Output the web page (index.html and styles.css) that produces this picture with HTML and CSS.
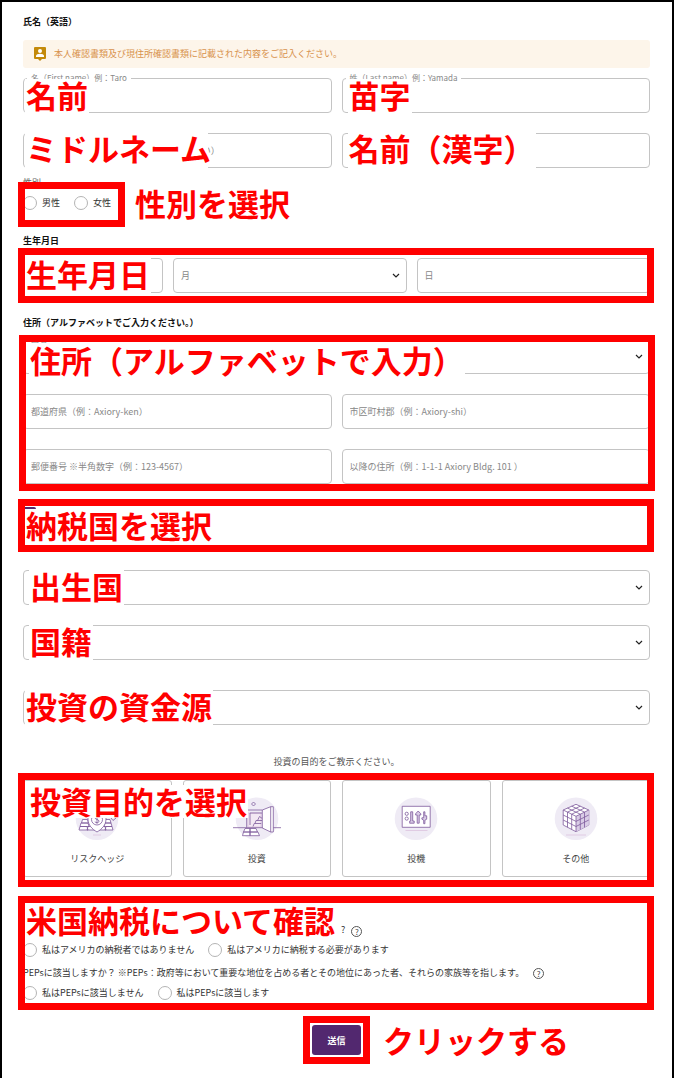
FILE: index.html
```html
<!DOCTYPE html>
<html lang="ja">
<head>
    <meta charset="UTF-8">
    <meta name="viewport" content="width=device-width, initial-scale=1.0">
    <title>口座開設フォーム</title>
    <link rel="stylesheet" href="styles.css">
</head>
<body>
    <form class="page">
        <!-- Name -->
        <h2>氏名（英語）</h2>
        <div class="notice">
            <svg width="12" height="14" viewBox="0 0 12 14" aria-hidden="true">
                <path fill="#c48a0a" d="M1 0h10a1 1 0 0 1 1 1v10a1 1 0 0 1-1 1H8l-2 2-2-2H1a1 1 0 0 1-1-1V1a1 1 0 0 1 1-1z"/>
                <circle cx="6" cy="4" r="2" fill="#fff"/>
                <path fill="#fff" d="M2 10V9c0-1.500 2-2.300 4-2.300s4 .8 4 2.300v1z"/>
            </svg>
            本人確認書類及び現住所確認書類に記載された内容をご記入ください。
        </div>
        <div class="grid names">
            <div class="field">
                <input type="text" id="first-name">
                <label class="float" for="first-name">名（First name）例：Taro</label>
                <span class="note">名前</span>
            </div>
            <div class="field">
                <input type="text" id="last-name">
                <label class="float" for="last-name">姓（Last name）例：Yamada</label>
                <span class="note note-inset">苗字</span>
            </div>
            <div class="field">
                <input type="text" id="middle-name" placeholder="ミドルネーム（お持ちの場合はご記入下さい）">
                <label class="note note-short note-high" for="middle-name">ミドルネーム</label>
            </div>
            <div class="field">
                <input type="text" id="kanji-name">
                <label class="note note-inset note-high" for="kanji-name">名前（漢字）</label>
            </div>
        </div>

        <!-- Gender -->
        <p class="label">性別</p>
        <div class="gender">
            <div class="radios">
                <label><input type="radio" name="gender">男性</label>
                <label><input type="radio" name="gender">女性</label>
                <span class="frame frame-gender"></span>
            </div>
            <span class="callout">性別を選択</span>
        </div>

        <!-- Birthday -->
        <h2 class="birth-title">生年月日</h2>
        <div class="birth">
            <div class="field">
                <input type="text" id="year">
                <label class="note" for="year">生年月日</label>
            </div>
            <div class="field">
                <select aria-label="月"><option>月</option></select>
            </div>
            <div class="field">
                <input type="text" aria-label="日" placeholder="日">
            </div>
            <span class="frame frame-birth"></span>
        </div>

        <!-- Address -->
        <h2 class="address-title">住所（アルファベットでご入力ください。）</h2>
        <div class="grid address">
            <div class="field wide">
                <select id="country"><option></option></select>
                <label class="float" for="country">国名</label>
                <span class="note note-inset note-low">住所（アルファベットで入力）</span>
            </div>
            <div class="field"><input type="text" aria-label="都道府県" placeholder="都道府県（例：Axiory-ken）"></div>
            <div class="field"><input type="text" aria-label="市区町村郡" placeholder="市区町村郡（例：Axiory-shi）"></div>
            <div class="field"><input type="text" aria-label="郵便番号" placeholder="郵便番号 ※半角数字（例：123-4567）"></div>
            <div class="field"><input type="text" aria-label="以降の住所" placeholder="以降の住所（例：1-1-1 Axiory Bldg. 101 ）"></div>
            <span class="frame frame-address"></span>
        </div>

        <!-- Tax country -->
        <div class="tax">
            <input type="checkbox" id="tax" checked>
            <label class="note" for="tax">納税国を選択</label>
            <span class="frame"></span>
        </div>

        <div class="selects">
            <div class="field">
                <select id="birthplace"><option></option></select>
                <label class="note note-inset" for="birthplace">出生国</label>
            </div>
            <div class="field">
                <select id="nationality"><option></option></select>
                <label class="note note-inset" for="nationality">国籍</label>
            </div>
            <div class="field funds">
                <select id="funds"><option></option></select>
                <label class="note" for="funds">投資の資金源</label>
            </div>
        </div>

        <!-- Purpose -->
        <p class="purpose-title">投資の目的をご教示ください。</p>
        <div class="cards">
            <button type="button" class="card">
                <svg class="icon" viewBox="0 0 48 44" aria-hidden="true">
                    <circle class="disc" cx="24" cy="22.700" r="21.300"/>
                    <path class="fill" d="M8 27h7l1 3.500H7zM9.500 23.500h5l1 3.500h-7zM15 30.500h6l1 3.500h-8zM7 30.500h7l1 3.500H6zM32 27h6l1 3.500h-8zM32 23.500h5l1 3.500h-6zM33 30.500h6l1 3.500h-8zM27 30.500h5l1 3.500h-7z"/>
                    <path class="fill" d="M24 11c3 2.500 6 3 9 3v9c0 6-4 10-9 13-5-3-9-7-9-13v-9c3 0 6-.5 9-3z"/>
                    <circle class="line" cx="24" cy="23.500" r="5.500"/>
                    <path class="line" d="M26 21c-1-1-4-1-4 .8 0 2 4 1.200 4 3.400 0 1.800-3 1.800-4.200.6M24 19.200v8.600M38 22l2 2.500 3-2.500"/>
                    <path class="shade" d="M20 39h8"/>
                </svg>
                リスクヘッジ
            </button>
            <button type="button" class="card">
                <svg class="icon" viewBox="0 0 48 44" aria-hidden="true">
                    <circle class="disc" cx="24" cy="22.700" r="21.300"/>
                    <path class="shade" d="M15 17h13v14H15z"/>
                    <path class="line" d="M0 31.700h48M13.700 31.700V14h15.600M17 29V17h12M20.500 6l2 2-2 2-2-2zM20 30.500l1.200-3h7M22 27.500l1-3h6M24.500 24.500l2-4 2.800 2"/>
                    <path class="fill" d="M29.300 14l8.400-3.300h2.600V36h-2.600l-8.400-4z"/>
                    <path class="line" d="M37.700 10.700V36"/>
                    <path class="fill" d="M12 32.500h5v3.500h-6.500zM17 32.500h6l1.500 3.500H17zM10.500 36H17v3.700H9.500zM17 36h8l1.500 3.700H17z"/>
                </svg>
                投資
            </button>
            <button type="button" class="card">
                <svg class="icon" viewBox="0 0 48 44" aria-hidden="true">
                    <circle class="disc" cx="24" cy="22.700" r="21.300"/>
                    <path class="fill" d="M10.200 10.300h28v21h-28z"/>
                    <circle class="line" cx="14.700" cy="17.800" r="1.600"/>
                    <circle class="line" cx="14.700" cy="22.600" r="1.600"/>
                    <path class="tool" d="M18.700 15.800h2v9.200h1.500v2.200h-4.500V25h1zM26.200 15l2.600 2.800v1.200h-1.600v8.200h-2V19h-1.600v-1.200zM31.700 15.800h1.200v4h1.800v3.400l-1.800 1v3.500h-1.200v-3.500l-1.800-1v-1.400h1.800z"/>
                    <path class="shade" d="M13.500 34.500h22"/>
                </svg>
                投機
            </button>
            <button type="button" class="card">
                <svg class="icon" viewBox="0 0 48 44" aria-hidden="true">
                    <circle class="disc" cx="24" cy="22.700" r="21.300"/>
                    <path class="fill" d="M24 8.300l12.800 5.700v15L24 35.700 11.200 29V14z"/>
                    <path fill="#d9cce6" d="M24 20.300L36.800 14v15L24 35.700z"/>
                    <path class="line" d="M11.200 14L24 20.300 36.800 14M24 20.300v15.400M15.500 12.100l12.800 6.100M19.700 10.200l12.800 5.900M32.500 12.100l-12.800 6.100M28.300 10.200l-12.800 5.900M15.500 16.100v15.200M19.700 18.200v15.300M28.300 18.200v15.300M32.500 16.100v15.200M11.200 19L24 25.400 36.800 19M11.200 24L24 30.500 36.800 24"/>
                    <path class="shade" d="M14 39h20"/>
                </svg>
                その他
            </button>
            <span class="note note-inset note-cards">投資目的を選択</span>
            <span class="frame frame-cards"></span>
        </div>

        <!-- US tax and PEPs -->
        <div class="confirm">
            <div class="question us-question">
                <span class="callout">米国納税について確認</span>
                <span>?</span>
                <button type="button" class="help">?</button>
            </div>
            <div class="radios">
                <label><input type="radio" name="us-tax">私はアメリカの納税者ではありません</label>
                <label><input type="radio" name="us-tax">私はアメリカに納税する必要があります</label>
            </div>
            <div class="question">
                <span>PEPsに該当しますか？ ※PEPs：政府等において重要な地位を占める者とその地位にあった者、それらの家族等を指します。</span>
                <button type="button" class="help">?</button>
            </div>
            <div class="radios">
                <label><input type="radio" name="peps">私はPEPsに該当しません</label>
                <label><input type="radio" name="peps">私はPEPsに該当します</label>
            </div>
            <span class="frame frame-confirm"></span>
        </div>

        <div class="submit-row">
            <div class="submit-box">
                <button type="submit" class="submit">送信</button>
            </div>
            <span class="callout">クリックする</span>
        </div>
    </form>
</body>
</html>
```
FILE: styles.css
```css
* {
    box-sizing: border-box;
}
body {
    margin: 0;
    background-color: #fff;
    color: #333;
    font-family: "Noto Sans CJK JP", "Noto Sans", sans-serif;
    font-size: 9px;
    line-height: 14px;
}
h2, p {
    margin: 0;
    font-size: 9px;
}
h2 {
    color: #111;
    font-weight: 700;
}
input, select, button {
    margin: 0;
    font-family: inherit;
    font-size: 9px;
}
.page {
    min-height: 100vh;
    padding: 13px 22px 14px 21px;
    border: 2px solid #000;
}
.notice {
    display: flex;
    align-items: center;
    gap: 8px;
    height: 28px;
    margin: 11px 0 10px;
    padding: 0 11px;
    border-radius: 3px;
    background-color: #fdf5ea;
    color: #d8924c;
}

/* Fields */
.grid {
    display: grid;
    grid-template-columns: 1fr 1fr;
    gap: 20px 10px;
}
.wide {
    grid-column: 1 / -1;
}
.field {
    position: relative;
    min-width: 0;
}
.field input,
.field select {
    display: block;
    width: 100%;
    height: 35px;
    padding: 0 7px;
    border: 1px solid #c4c4c4;
    border-radius: 4px;
    background-color: #fff;
    color: #888;
}
.field input::placeholder {
    color: #888;
    opacity: 1;
}
.field select {
    appearance: none;
    background-image: url("data:image/svg+xml,%3Csvg xmlns='http://www.w3.org/2000/svg' width='8' height='5' viewBox='0 0 8 5'%3E%3Cpath d='M1 1l3 3 3-3' fill='none' stroke='%23222' stroke-width='1.200'/%3E%3C/svg%3E");
    background-repeat: no-repeat;
    background-position: right 6px center;
}
.float {
    position: absolute;
    top: -7px;
    left: 4px;
    padding: 0 4px;
    background-color: #fff;
    color: #888;
    font-size: 8px;
}

/* Red annotations */
.note, .callout {
    color: #f00;
    font-size: 31px;
    font-weight: 700;
    line-height: 34px;
    white-space: nowrap;
}
.note {
    position: absolute;
    top: 0;
    left: 2px;
    padding: 0 1px 4px;
    background-color: #fff;
    line-height: 32px;
}
.names .note {
    top: 1px;
}
.names .note-high {
    top: -1px;
}
.note-inset {
    left: 6px;
}
.note-short {
    width: 183px;
}
.address .note-low {
    top: 5px;
}
.note-cards {
    top: 5px;
    padding-bottom: 1px;
}
.frame {
    position: absolute;
    inset: 0 -4px 0 -5px;
    border: 7px solid #f00;
    pointer-events: none;
}
.frame-gender {
    inset: -14px -14px -17px -5px;
}
.frame-birth {
    inset: -10px -4px -10px -5px;
}
.frame-address {
    inset: -4px -5px -7px -4px;
}
.frame-cards {
    inset: -7px -4px -10px -5px;
}
.frame-confirm {
    inset: -7px -4px -10px -5px;
}

/* Radios */
.label {
    margin-top: 8px;
    color: #666;
}
.gender {
    display: flex;
    align-items: center;
    gap: 24px;
    height: 14px;
    margin-top: 6px;
}
.radios {
    position: relative;
    display: flex;
    gap: 14px;
}
.radios label {
    display: flex;
    align-items: center;
    gap: 5px;
}
.radios input {
    appearance: none;
    width: 14px;
    height: 14px;
    border: 1px solid #b4b4b4;
    border-radius: 50%;
    background-color: #fff;
}
.radios input:checked {
    border: 4px solid #52286f;
}

.birth-title {
    margin-top: 24px;
}
.birth {
    position: relative;
    display: grid;
    grid-template-columns: 3fr 5fr 5fr;
    gap: 10px;
    margin-top: 10px;
}
.address-title {
    margin-top: 23px;
}
.address {
    position: relative;
    margin-top: 9px;
}
.tax {
    position: relative;
    height: 53px;
    margin-top: 15px;
    padding-top: 8px;
}
.tax input {
    display: block;
    width: 13px;
    height: 13px;
    accent-color: #52286f;
}
.tax .note {
    top: 10px;
}
.selects {
    display: grid;
    gap: 20px;
    margin-top: 18px;
}
.funds {
    margin-top: 10px;
}

/* Purpose cards */
.purpose-title {
    margin-top: 30px;
    color: #555;
    text-align: center;
}
.cards {
    position: relative;
    display: grid;
    grid-template-columns: repeat(4, 1fr);
    gap: 11px;
    margin-top: 11px;
}
.card {
    display: flex;
    flex-direction: column;
    align-items: center;
    gap: 12px;
    padding: 15px 0 10px;
    border: 1px solid #c4c4c4;
    border-radius: 3px;
    background-color: #fff;
    color: #444;
    line-height: 14px;
}
.icon {
    width: 48px;
    height: 44px;
}
.disc {
    fill: #efebf5;
}
.line, .fill, .tool {
    fill: none;
    stroke: #7d5a9c;
    stroke-width: 0.8;
}
.fill {
    fill: #fff;
}
.tool {
    fill: #d9cce6;
}
.shade {
    fill: #f3e8f3;
    stroke: #e0cbe3;
}

/* Confirmation */
.confirm {
    position: relative;
    margin-top: 26px;
}
.question {
    display: flex;
    align-items: center;
    gap: 9px;
    margin: 9px 0 6px;
}
.us-question {
    align-items: flex-end;
    gap: 6px;
    margin-top: 0;
    padding-left: 3px;
}
.help {
    width: 11px;
    height: 11px;
    padding: 0;
    border: 1px solid #555;
    border-radius: 50%;
    background-color: #fff;
    color: #444;
    font-size: 8px;
    line-height: 9px;
}
.submit-row {
    display: grid;
    grid-template-columns: 1fr auto 1fr;
    align-items: center;
    gap: 13px;
    margin-top: 16px;
}
.submit-box {
    grid-column: 2;
    padding: 2px;
    border: 7px solid #f00;
}
.submit {
    display: block;
    width: 49px;
    height: 30px;
    border: 0;
    border-radius: 3px;
    background-color: #52286f;
    color: #fff;
    font-weight: 700;
}
```
